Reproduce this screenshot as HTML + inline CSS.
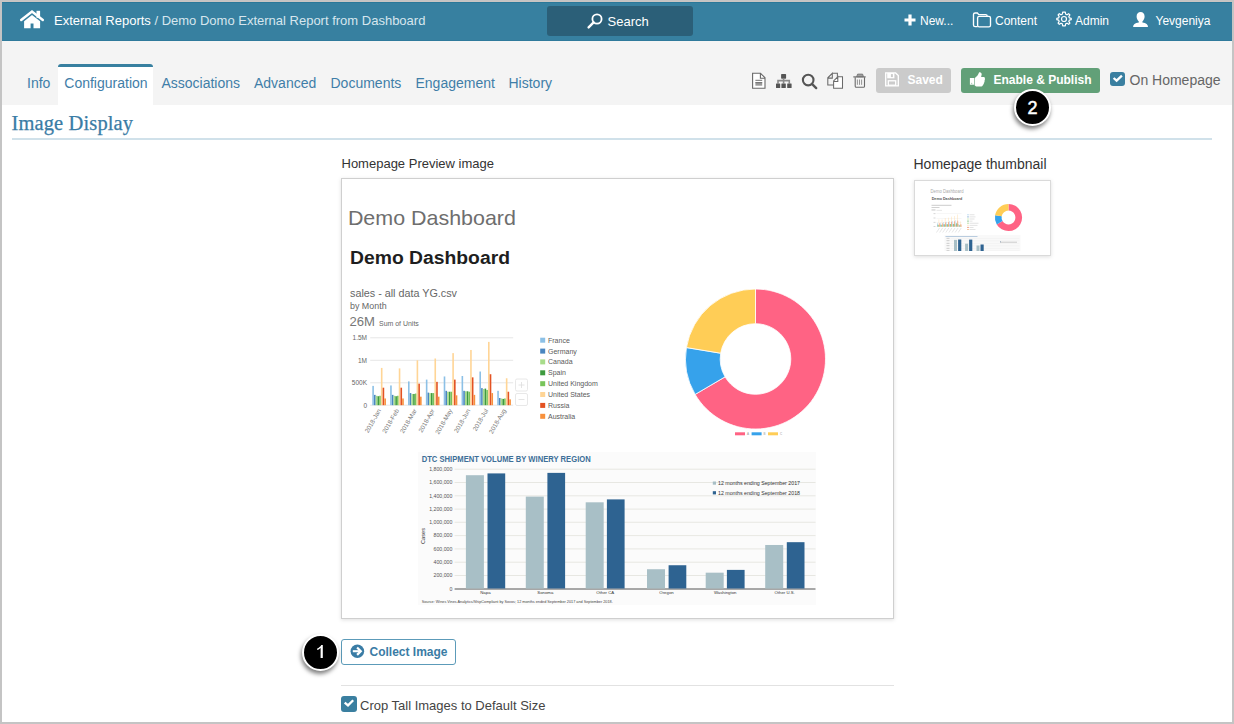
<!DOCTYPE html>
<html><head><meta charset="utf-8">
<style>
*{margin:0;padding:0;box-sizing:border-box}
html,body{width:1234px;height:724px;overflow:hidden;background:#c4c4c4;font-family:"Liberation Sans",sans-serif}
.a{position:absolute;white-space:nowrap;line-height:1}
#page{position:absolute;left:2px;top:2px;width:1230px;height:720px;background:#fff;overflow:hidden}
#hdr{position:absolute;left:0;top:0;width:1230px;height:38px;background:#3880a0}
#tabs{position:absolute;left:0;top:38px;width:1230px;height:64px;background:#f3f3f3}
.wt{color:#fff}
.tab{color:#3f7ea8;font-size:14px}
svg{position:absolute;overflow:visible}
</style></head><body>
<div id="page"></div>
<!-- everything below uses page (1234x724) absolute coords -->
<div class="a" style="left:2px;top:2px;width:1230px;height:39px;background:#3780a0;border-top:1px solid #2a7899;border-bottom:1px solid #2f7a9b"></div>
<div class="a" style="left:0;top:1px;width:1234px;height:1px;background:#c9c5c3"></div>
<div class="a" style="left:2px;top:41px;width:1230px;height:64px;background:#f4f4f4"></div>

<!-- header -->
<svg style="left:0;top:0" width="60" height="40" viewBox="0 0 60 40">
  <rect x="36.5" y="10.8" width="3.6" height="7" fill="#fff"/>
  <path d="M21.2 20 L32 11.6 L42.8 20" fill="none" stroke="#fff" stroke-width="2.5" stroke-linecap="round" stroke-linejoin="miter"/>
  <path d="M24.1 21.2 L32 15 L40.1 21.2 V28.2 H33.5 V23.4 H30.6 V28.2 H24.1 Z" fill="#fff"/>
</svg>
<div class="a wt" style="left:54px;top:13.7px;font-size:13px">External Reports <span style="color:#d6e6ee">/ Demo Domo External Report from Dashboard</span></div>

<div class="a" style="left:547px;top:6px;width:146px;height:30px;background:#2b5f78;border-radius:3px"></div>
<svg style="left:587px;top:13px" width="16" height="16" viewBox="0 0 16 16">
  <circle cx="10" cy="6" r="4.6" fill="none" stroke="#fff" stroke-width="1.8"/>
  <path d="M6.6 9.4 L1.6 14.4" stroke="#fff" stroke-width="2.4" stroke-linecap="round"/>
</svg>
<div class="a wt" style="left:607.5px;top:14.9px;font-size:13px">Search</div>

<svg style="left:904px;top:13.5px" width="12" height="12" viewBox="0 0 12 12">
  <path d="M6 0.5 V11.5 M0.5 6 H11.5" stroke="#fff" stroke-width="3.2"/>
</svg>
<div class="a wt" style="left:920px;top:14.8px;font-size:12px">New...</div>
<svg style="left:968px;top:8px" width="28" height="24" viewBox="968 8 28 24">
  <path d="M977.6 26.6 H975.1 Q973.5 26.6 973.5 25 V14.6 Q973.5 13 975.1 13 H977.4 L978.7 14.6 H985.6 Q987.2 14.6 987.2 16.2" fill="none" stroke="#fff" stroke-width="1.35"/>
  <rect x="977.6" y="16.4" width="12.9" height="10.4" rx="1.6" fill="none" stroke="#fff" stroke-width="1.35"/>
</svg>
<div class="a wt" style="left:995px;top:14.8px;font-size:12px">Content</div>
<svg style="left:1056.4px;top:11.4px" width="16" height="16" viewBox="0 0 16 16">
  <path d="M8 1 L9.3 1.2 L9.7 3.2 L11 3.8 L12.7 2.7 L13.3 3.3 L13.9 3.9 L12.8 5.6 L13.4 6.9 L15.2 7.3 V8.7 L13.4 9.1 L12.8 10.4 L13.9 12.1 L12.7 13.3 L11 12.2 L9.7 12.8 L9.3 14.8 H6.7 L6.3 12.8 L5 12.2 L3.3 13.3 L2.1 12.1 L3.2 10.4 L2.6 9.1 L0.8 8.7 V7.3 L2.6 6.9 L3.2 5.6 L2.1 3.9 L3.3 2.7 L5 3.8 L6.3 3.2 L6.7 1.2 Z" fill="none" stroke="#fff" stroke-width="1.2" stroke-linejoin="round"/>
  <circle cx="8" cy="8" r="2.5" fill="none" stroke="#fff" stroke-width="1.2"/>
</svg>
<div class="a wt" style="left:1075px;top:14.8px;font-size:12px">Admin</div>
<svg style="left:1128px;top:8px" width="24" height="24" viewBox="1128 8 24 24">
  <path d="M1136.6 16.6 C1136.6 13.6 1138.2 12.1 1140.6 12.1 C1143 12.1 1144.6 13.6 1144.6 16.6 C1144.6 18.6 1143.6 20.4 1142.4 21.4 V22.6 C1146.2 23.2 1148 24.4 1148 27.1 H1133.1 C1133.1 24.4 1134.9 23.2 1138.8 22.6 V21.4 C1137.6 20.4 1136.6 18.6 1136.6 16.6 Z" fill="#fff"/>
</svg>
<div class="a wt" style="left:1155.5px;top:14.8px;font-size:12px">Yevgeniya</div>

<!-- tabs -->
<div class="a" style="left:58px;top:64px;width:95px;height:41px;background:#fff;border-top:3px solid #3880a0;border-radius:3px 3px 0 0"></div>
<div class="a tab" style="left:27px;top:75.9px">Info</div>
<div class="a tab" style="left:64.3px;top:75.9px">Configuration</div>
<div class="a tab" style="left:161.4px;top:75.9px">Associations</div>
<div class="a tab" style="left:254px;top:75.9px">Advanced</div>
<div class="a tab" style="left:330.5px;top:75.9px">Documents</div>
<div class="a tab" style="left:415.5px;top:75.9px">Engagement</div>
<div class="a tab" style="left:508.5px;top:75.9px">History</div>

<!-- toolbar -->
<svg style="left:740px;top:66px" width="130" height="26" viewBox="740 66 130 26">
  <path d="M752.6 73.3 H760.5 L765 77.8 V88.2 H752.6 Z" fill="#fff" stroke="#686868" stroke-width="1.1"/>
  <path d="M760.4 73.3 V78.2 H765" fill="none" stroke="#686868" stroke-width="1.1"/>
  <rect x="755.4" y="79.8" width="6.8" height="1" fill="#707070"/>
  <rect x="755.4" y="82.2" width="6.8" height="3.5" fill="#9a9a9a"/>
  <rect x="755.4" y="82.2" width="6.8" height="0.9" fill="#6a6a6a"/>

  <rect x="781.1" y="74" width="5" height="4.7" rx="0.7" fill="#555"/>
  <path d="M783.6 78.5 V83.6 M778 83.6 V80.6 H789.3 V83.6" fill="none" stroke="#8a8a8a" stroke-width="1.6"/>
  <rect x="776" y="83.5" width="4.2" height="4.4" rx="0.5" fill="#555"/>
  <rect x="781.4" y="83.5" width="4.4" height="4.4" rx="0.5" fill="#555"/>
  <rect x="787.2" y="83.5" width="4.4" height="4.4" rx="0.5" fill="#555"/>

  <circle cx="808.2" cy="80.1" r="5.3" fill="none" stroke="#555" stroke-width="2.1"/>
  <path d="M812.2 84.1 L816.2 88.1" stroke="#555" stroke-width="2.3" stroke-linecap="round"/>

  <path d="M832.3 73.3 H837.4 V77 M833.5 84.9 H827.8 V77.8 L832.3 73.3 V78.1 H827.8" fill="none" stroke="#6a6a6a" stroke-width="1.05"/>
  <path d="M837.8 76.8 H842.5 V88.2 H833.6 V81 L837.8 76.8 V81.5 H833.6" fill="#fff" stroke="#6a6a6a" stroke-width="1.05"/>

  <path d="M856.6 76.8 L857.6 74.1 H862.6 L863.5 76.8 Z" fill="#a0a0a0" stroke="#707070" stroke-width="0.8"/>
  <path d="M853.3 76.9 H865.7" stroke="#707070" stroke-width="1.2"/>
  <path d="M855.2 77.2 V86.2 Q855.2 87.3 856.3 87.3 H863.4 Q864.5 87.3 864.5 86.2 V77.2" fill="none" stroke="#6a6a6a" stroke-width="1.1"/>
  <path d="M857.4 79.5 V84.8 M859.5 79.5 V84.8 M861.6 79.5 V84.8" stroke="#8a8a8a" stroke-width="0.9"/>
</svg>

<div class="a" style="left:876px;top:68px;width:75px;height:25px;background:#cbcbcb;border-radius:3px"></div>
<svg style="left:880px;top:68px" width="24" height="24" viewBox="880 68 24 24">
  <path d="M885.7 72.9 H895.6 L898.3 75.6 V85.9 H885.7 Z" fill="none" stroke="#fff" stroke-width="1.35"/>
  <rect x="887.2" y="73" width="7.2" height="5.3" fill="#fff"/>
  <rect x="890.9" y="74.1" width="2" height="3" fill="#cbcbcb"/>
  <rect x="888.3" y="80.8" width="7.4" height="4.4" fill="none" stroke="#fff" stroke-width="1.3"/>
</svg>
<div class="a" style="left:907.5px;top:73.8px;font-size:12px;font-weight:bold;color:#fff">Saved</div>

<div class="a" style="left:961px;top:68px;width:139px;height:25px;background:#62a078;border-radius:3px"></div>
<svg style="left:964px;top:66px" width="26" height="26" viewBox="964 66 26 26">
  <rect x="969.9" y="78" width="4.1" height="6.7" fill="#fff"/>
  <circle cx="971.7" cy="83.3" r="0.55" fill="#8ab49a"/>
  <path d="M974.6 78.3 L977.3 75.8 C978.1 74.8 978.5 73.6 979 72.4 C980.6 71.9 981.9 73 981.7 74.6 L981.1 77 H983.7 C984.7 77 985.1 77.9 984.9 78.7 C985.1 79.5 984.9 80.1 984.5 80.7 C984.7 81.5 984.5 82.3 983.9 82.7 C984 83.7 983.7 84.5 982.9 84.9 C982.7 86.1 981.7 86.6 980.5 86.6 H977.2 C976.2 86.6 975.3 85.8 974.6 85.2 Z" fill="#fff"/>
</svg>
<div class="a" style="left:993.5px;top:73.8px;font-size:12px;font-weight:bold;color:#fff">Enable &amp; Publish</div>

<div class="a" style="left:1110.3px;top:71.5px;width:14.6px;height:14.4px;background:#3a7fa0;border-radius:3px"></div>
<svg style="left:1110.3px;top:71.5px" width="15" height="15" viewBox="0 0 15 15">
  <path d="M3.6 6 L6.6 8.6 L11.9 3.6" fill="none" stroke="#fff" stroke-width="2.3"/>
</svg>
<div class="a" style="left:1129.5px;top:72.6px;font-size:14px;color:#666">On Homepage</div>

<!-- heading -->
<div class="a" style="left:11.5px;top:112.8px;font-family:'Liberation Serif',serif;font-size:20.5px;letter-spacing:0.12px;-webkit-text-stroke:0.25px #3a7ca5;color:#3a7ca5">Image Display</div>
<div class="a" style="left:12px;top:138px;width:1200px;height:2px;background:#d0e1ea"></div>

<!-- labels -->
<div class="a" style="left:341.5px;top:157.2px;font-size:13px;color:#333">Homepage Preview image</div>
<div class="a" style="left:913.5px;top:156.9px;font-size:14px;color:#333">Homepage thumbnail</div>

<!-- preview frame -->
<div class="a" style="left:341px;top:178px;width:553px;height:441px;border:1px solid #cfcfcf;box-shadow:0 1px 4px rgba(0,0,0,.13);background:#fff"></div>
<!-- thumb frame -->
<div class="a" style="left:913.5px;top:179.5px;width:137px;height:76px;border:1px solid #dadada;box-shadow:0 1px 4px rgba(0,0,0,.13);background:#fff"></div>
<svg style="left:0;top:0" width="1234" height="724" viewBox="0 0 1234 724" font-family="Liberation Sans, sans-serif">
<text x="347.9" y="225.2" font-size="21" fill="#6e6e6e" textLength="168" lengthAdjust="spacingAndGlyphs">Demo Dashboard</text>
<text x="350" y="263.6" font-size="18" fill="#1e1e1e" font-weight="bold" textLength="160" lengthAdjust="spacingAndGlyphs">Demo Dashboard</text>
<text x="350" y="297" font-size="10.5" fill="#666" textLength="107" lengthAdjust="spacingAndGlyphs">sales - all data YG.csv</text>
<text x="350" y="309" font-size="8.5" fill="#666" textLength="36.6" lengthAdjust="spacingAndGlyphs">by Month</text>
<text x="349.5" y="325.7" font-size="13" fill="#777" textLength="25.5" lengthAdjust="spacingAndGlyphs">26M</text>
<text x="379" y="325.5" font-size="6.5" fill="#666" textLength="39.8" lengthAdjust="spacingAndGlyphs">Sum of Units</text>
<line x1="370.2" y1="405.2" x2="513.2" y2="405.2" stroke="#e6e6e6" stroke-width="1"/>
<text x="367" y="407.5" font-size="6.5" fill="#666" text-anchor="end">0</text>
<line x1="370.2" y1="382.8" x2="513.2" y2="382.8" stroke="#e6e6e6" stroke-width="1"/>
<text x="367" y="385.1" font-size="6.5" fill="#666" text-anchor="end">500K</text>
<line x1="370.2" y1="360.3" x2="513.2" y2="360.3" stroke="#e6e6e6" stroke-width="1"/>
<text x="367" y="362.6" font-size="6.5" fill="#666" text-anchor="end">1M</text>
<line x1="370.2" y1="337.8" x2="513.2" y2="337.8" stroke="#e6e6e6" stroke-width="1"/>
<text x="367" y="340.1" font-size="6.5" fill="#666" text-anchor="end">1.5M</text>
<rect x="372.30" y="385.89" width="1.6" height="19.31" fill="#8cc0e6"/>
<rect x="374.02" y="394.87" width="1.6" height="10.33" fill="#4a86c0"/>
<rect x="375.74" y="395.77" width="1.6" height="9.43" fill="#a8dc8a"/>
<rect x="377.46" y="396.22" width="1.6" height="8.98" fill="#3e9a3e"/>
<rect x="379.18" y="395.77" width="1.6" height="9.43" fill="#78c45a"/>
<rect x="380.90" y="367.93" width="1.6" height="37.27" fill="#ffd596"/>
<rect x="382.62" y="387.69" width="1.6" height="17.51" fill="#e35222"/>
<rect x="384.34" y="398.46" width="1.6" height="6.74" fill="#f8913c"/>
<text transform="translate(381.3,410.5) rotate(-60)" font-size="6.3" fill="#777" text-anchor="end">2018-Jan</text>
<rect x="390.15" y="385.44" width="1.6" height="19.76" fill="#8cc0e6"/>
<rect x="391.87" y="394.87" width="1.6" height="10.33" fill="#4a86c0"/>
<rect x="393.59" y="395.77" width="1.6" height="9.43" fill="#a8dc8a"/>
<rect x="395.31" y="396.22" width="1.6" height="8.98" fill="#3e9a3e"/>
<rect x="397.03" y="395.77" width="1.6" height="9.43" fill="#78c45a"/>
<rect x="398.75" y="368.38" width="1.6" height="36.82" fill="#ffd596"/>
<rect x="400.47" y="387.69" width="1.6" height="17.51" fill="#e35222"/>
<rect x="402.19" y="398.46" width="1.6" height="6.74" fill="#f8913c"/>
<text transform="translate(399.2,410.5) rotate(-60)" font-size="6.3" fill="#777" text-anchor="end">2018-Feb</text>
<rect x="408.00" y="381.40" width="1.6" height="23.80" fill="#8cc0e6"/>
<rect x="409.72" y="393.08" width="1.6" height="12.12" fill="#4a86c0"/>
<rect x="411.44" y="393.97" width="1.6" height="11.23" fill="#a8dc8a"/>
<rect x="413.16" y="393.97" width="1.6" height="11.23" fill="#3e9a3e"/>
<rect x="414.88" y="393.53" width="1.6" height="11.67" fill="#78c45a"/>
<rect x="416.60" y="360.30" width="1.6" height="44.90" fill="#ffd596"/>
<rect x="418.32" y="383.65" width="1.6" height="21.55" fill="#e35222"/>
<rect x="420.04" y="396.67" width="1.6" height="8.53" fill="#f8913c"/>
<text transform="translate(417.0,410.5) rotate(-60)" font-size="6.3" fill="#777" text-anchor="end">2018-Mar</text>
<rect x="425.85" y="379.61" width="1.6" height="25.59" fill="#8cc0e6"/>
<rect x="427.57" y="392.63" width="1.6" height="12.57" fill="#4a86c0"/>
<rect x="429.29" y="393.08" width="1.6" height="12.12" fill="#a8dc8a"/>
<rect x="431.01" y="393.08" width="1.6" height="12.12" fill="#3e9a3e"/>
<rect x="432.73" y="393.08" width="1.6" height="12.12" fill="#78c45a"/>
<rect x="434.45" y="358.50" width="1.6" height="46.70" fill="#ffd596"/>
<rect x="436.17" y="381.85" width="1.6" height="23.35" fill="#e35222"/>
<rect x="437.89" y="396.67" width="1.6" height="8.53" fill="#f8913c"/>
<text transform="translate(434.9,410.5) rotate(-60)" font-size="6.3" fill="#777" text-anchor="end">2018-Apr</text>
<rect x="443.70" y="376.46" width="1.6" height="28.74" fill="#8cc0e6"/>
<rect x="445.42" y="390.83" width="1.6" height="14.37" fill="#4a86c0"/>
<rect x="447.14" y="391.73" width="1.6" height="13.47" fill="#a8dc8a"/>
<rect x="448.86" y="391.73" width="1.6" height="13.47" fill="#3e9a3e"/>
<rect x="450.58" y="391.73" width="1.6" height="13.47" fill="#78c45a"/>
<rect x="452.30" y="353.12" width="1.6" height="52.08" fill="#ffd596"/>
<rect x="454.02" y="379.61" width="1.6" height="25.59" fill="#e35222"/>
<rect x="455.74" y="395.32" width="1.6" height="9.88" fill="#f8913c"/>
<text transform="translate(452.7,410.5) rotate(-60)" font-size="6.3" fill="#777" text-anchor="end">2018-May</text>
<rect x="461.55" y="376.01" width="1.6" height="29.19" fill="#8cc0e6"/>
<rect x="463.27" y="390.83" width="1.6" height="14.37" fill="#4a86c0"/>
<rect x="464.99" y="391.28" width="1.6" height="13.92" fill="#a8dc8a"/>
<rect x="466.71" y="391.28" width="1.6" height="13.92" fill="#3e9a3e"/>
<rect x="468.43" y="391.73" width="1.6" height="13.47" fill="#78c45a"/>
<rect x="470.15" y="349.97" width="1.6" height="55.23" fill="#ffd596"/>
<rect x="471.87" y="377.36" width="1.6" height="27.84" fill="#e35222"/>
<rect x="473.59" y="394.87" width="1.6" height="10.33" fill="#f8913c"/>
<text transform="translate(470.6,410.5) rotate(-60)" font-size="6.3" fill="#777" text-anchor="end">2018-Jun</text>
<rect x="479.40" y="371.52" width="1.6" height="33.68" fill="#8cc0e6"/>
<rect x="481.12" y="388.14" width="1.6" height="17.06" fill="#4a86c0"/>
<rect x="482.84" y="389.04" width="1.6" height="16.16" fill="#a8dc8a"/>
<rect x="484.56" y="388.59" width="1.6" height="16.61" fill="#3e9a3e"/>
<rect x="486.28" y="389.93" width="1.6" height="15.27" fill="#78c45a"/>
<rect x="488.00" y="341.89" width="1.6" height="63.31" fill="#ffd596"/>
<rect x="489.72" y="374.22" width="1.6" height="30.98" fill="#e35222"/>
<rect x="491.44" y="393.08" width="1.6" height="12.12" fill="#f8913c"/>
<text transform="translate(488.4,410.5) rotate(-60)" font-size="6.3" fill="#777" text-anchor="end">2018-Jul</text>
<rect x="497.25" y="390.83" width="1.6" height="14.37" fill="#8cc0e6"/>
<rect x="498.97" y="398.02" width="1.6" height="7.18" fill="#4a86c0"/>
<rect x="500.69" y="398.46" width="1.6" height="6.74" fill="#a8dc8a"/>
<rect x="502.41" y="398.91" width="1.6" height="6.29" fill="#3e9a3e"/>
<rect x="504.13" y="398.46" width="1.6" height="6.74" fill="#78c45a"/>
<rect x="505.85" y="378.26" width="1.6" height="26.94" fill="#ffd596"/>
<rect x="507.57" y="391.73" width="1.6" height="13.47" fill="#e35222"/>
<rect x="509.29" y="399.36" width="1.6" height="5.84" fill="#f8913c"/>
<text transform="translate(506.2,410.5) rotate(-60)" font-size="6.3" fill="#777" text-anchor="end">2018-Aug</text>
<rect x="515.5" y="379" width="12" height="12" rx="1.5" fill="#fff" stroke="#e2e2e2" stroke-width="0.8"/>
<path d="M518.5 385 H524.5 M521.5 382 V388" stroke="#ddd" stroke-width="0.8"/>
<rect x="515.5" y="393.5" width="12" height="12" rx="1.5" fill="#fff" stroke="#e2e2e2" stroke-width="0.8"/>
<path d="M518.5 399.5 H524.5" stroke="#ddd" stroke-width="0.8"/>
<rect x="540.2" y="337.7" width="5" height="5" fill="#8cc0e6"/>
<text x="548" y="342.7" font-size="7" fill="#5a5a5a">France</text>
<rect x="540.2" y="348.6" width="5" height="5" fill="#4a86c0"/>
<text x="548" y="353.6" font-size="7" fill="#5a5a5a">Germany</text>
<rect x="540.2" y="359.4" width="5" height="5" fill="#a8dc8a"/>
<text x="548" y="364.4" font-size="7" fill="#5a5a5a">Canada</text>
<rect x="540.2" y="370.3" width="5" height="5" fill="#3e9a3e"/>
<text x="548" y="375.3" font-size="7" fill="#5a5a5a">Spain</text>
<rect x="540.2" y="381.2" width="5" height="5" fill="#78c45a"/>
<text x="548" y="386.2" font-size="7" fill="#5a5a5a">United Kingdom</text>
<rect x="540.2" y="392.0" width="5" height="5" fill="#ffd596"/>
<text x="548" y="397.0" font-size="7" fill="#5a5a5a">United States</text>
<rect x="540.2" y="402.9" width="5" height="5" fill="#e35222"/>
<text x="548" y="407.9" font-size="7" fill="#5a5a5a">Russia</text>
<rect x="540.2" y="413.8" width="5" height="5" fill="#f8913c"/>
<text x="548" y="418.8" font-size="7" fill="#5a5a5a">Australia</text>
<path d="M755.50 289.00 A70 70 0 1 1 695.12 394.42 L725.05 376.86 A35.3 35.3 0 1 0 755.50 323.70 Z" fill="#ff6384" stroke="#fff" stroke-width="0.8"/>
<path d="M695.12 394.42 A70 70 0 0 1 686.44 347.57 L720.67 353.23 A35.3 35.3 0 0 0 725.05 376.86 Z" fill="#36a2eb" stroke="#fff" stroke-width="0.8"/>
<path d="M686.44 347.57 A70 70 0 0 1 755.50 289.00 L755.50 323.70 A35.3 35.3 0 0 0 720.67 353.23 Z" fill="#ffcd56" stroke="#fff" stroke-width="0.8"/>
<rect x="735" y="432.3" width="10" height="3" fill="#ff6384"/><rect x="751.6" y="432.3" width="10" height="3" fill="#36a2eb"/><rect x="768" y="432.3" width="10" height="3" fill="#ffcd56"/>
<text x="747" y="435.3" font-size="3" fill="#999">A</text><text x="763.5" y="435.3" font-size="3" fill="#999">B</text><text x="780" y="435.3" font-size="3" fill="#999">C</text>
<rect x="418" y="452" width="398" height="153" fill="#fbfbfb"/>
<text x="421.7" y="461.9" font-size="9.8" font-weight="bold" fill="#3d6f98" textLength="169" lengthAdjust="spacingAndGlyphs">DTC SHIPMENT VOLUME BY WINERY REGION</text>
<text x="452.3" y="590.6" font-size="5.2" fill="#555" text-anchor="end">0</text>
<line x1="454.6" y1="575.5" x2="815.5" y2="575.5" stroke="#e2e2dc" stroke-width="0.8"/>
<text x="452.3" y="577.3" font-size="5.2" fill="#555" text-anchor="end">200,000</text>
<line x1="454.6" y1="562.2" x2="815.5" y2="562.2" stroke="#e2e2dc" stroke-width="0.8"/>
<text x="452.3" y="564.0" font-size="5.2" fill="#555" text-anchor="end">400,000</text>
<line x1="454.6" y1="548.9" x2="815.5" y2="548.9" stroke="#e2e2dc" stroke-width="0.8"/>
<text x="452.3" y="550.7" font-size="5.2" fill="#555" text-anchor="end">600,000</text>
<line x1="454.6" y1="535.6" x2="815.5" y2="535.6" stroke="#e2e2dc" stroke-width="0.8"/>
<text x="452.3" y="537.4" font-size="5.2" fill="#555" text-anchor="end">800,000</text>
<line x1="454.6" y1="522.3" x2="815.5" y2="522.3" stroke="#e2e2dc" stroke-width="0.8"/>
<text x="452.3" y="524.1" font-size="5.2" fill="#555" text-anchor="end">1,000,000</text>
<line x1="454.6" y1="509.1" x2="815.5" y2="509.1" stroke="#e2e2dc" stroke-width="0.8"/>
<text x="452.3" y="510.9" font-size="5.2" fill="#555" text-anchor="end">1,200,000</text>
<line x1="454.6" y1="495.8" x2="815.5" y2="495.8" stroke="#e2e2dc" stroke-width="0.8"/>
<text x="452.3" y="497.6" font-size="5.2" fill="#555" text-anchor="end">1,400,000</text>
<line x1="454.6" y1="482.5" x2="815.5" y2="482.5" stroke="#e2e2dc" stroke-width="0.8"/>
<text x="452.3" y="484.3" font-size="5.2" fill="#555" text-anchor="end">1,600,000</text>
<line x1="454.6" y1="469.2" x2="815.5" y2="469.2" stroke="#e2e2dc" stroke-width="0.8"/>
<text x="452.3" y="471.0" font-size="5.2" fill="#555" text-anchor="end">1,800,000</text>
<line x1="454.6" y1="589" x2="815.5" y2="589" stroke="#555" stroke-width="1"/>
<text transform="translate(425.3,536) rotate(-90)" font-size="5.6" fill="#333" text-anchor="middle">Cases</text>
<rect x="465.90" y="475.20" width="18" height="113.30" fill="#a8bfc6"/>
<rect x="487.50" y="473.41" width="17.7" height="115.09" fill="#2e6391"/>
<text x="485.40" y="594" font-size="4.3" fill="#333" text-anchor="middle">Napa</text>
<rect x="525.80" y="496.60" width="18" height="91.90" fill="#a8bfc6"/>
<rect x="547.40" y="472.88" width="17.7" height="115.62" fill="#2e6391"/>
<text x="545.30" y="594" font-size="4.3" fill="#333" text-anchor="middle">Sonoma</text>
<rect x="585.70" y="502.31" width="18" height="86.19" fill="#a8bfc6"/>
<rect x="606.90" y="499.39" width="17.7" height="89.11" fill="#2e6391"/>
<text x="605.20" y="594" font-size="4.3" fill="#333" text-anchor="middle">Other CA</text>
<rect x="647.00" y="569.23" width="18" height="19.27" fill="#a8bfc6"/>
<rect x="668.60" y="565.24" width="17.7" height="23.26" fill="#2e6391"/>
<text x="666.50" y="594" font-size="4.3" fill="#333" text-anchor="middle">Oregon</text>
<rect x="705.70" y="572.68" width="18" height="15.82" fill="#a8bfc6"/>
<rect x="726.90" y="569.89" width="17.7" height="18.61" fill="#2e6391"/>
<text x="725.20" y="594" font-size="4.3" fill="#333" text-anchor="middle">Washington</text>
<rect x="765.20" y="544.98" width="18" height="43.52" fill="#a8bfc6"/>
<rect x="786.80" y="542.18" width="17.7" height="46.32" fill="#2e6391"/>
<text x="784.70" y="594" font-size="4.3" fill="#333" text-anchor="middle">Other U.S.</text>
<rect x="712.8" y="481.5" width="3.2" height="3.2" fill="#a8bfc6"/><rect x="712.8" y="491.2" width="3.2" height="3.2" fill="#2e6391"/>
<text x="718" y="485" font-size="5.6" fill="#333" textLength="82" lengthAdjust="spacingAndGlyphs">12 months ending September 2017</text>
<text x="718" y="494.7" font-size="5.6" fill="#333" textLength="82" lengthAdjust="spacingAndGlyphs">12 months ending September 2018</text>
<text x="421.7" y="602.6" font-size="4.2" fill="#444" textLength="191" lengthAdjust="spacingAndGlyphs">Source: Wines Vines Analytics/ShipCompliant by Sovos; 12 months ended September 2017 and September 2018.</text>
</svg>
<svg style="left:914.5px;top:180.5px;overflow:hidden" width="135" height="70.5" viewBox="914.5 180.5 135 70.5" font-family="Liberation Sans, sans-serif">
<text x="930" y="192" font-size="5" fill="#aaa" textLength="33" lengthAdjust="spacingAndGlyphs">Demo Dashboard</text>
<text x="931.2" y="199.6" font-size="4.3" font-weight="bold" fill="#555" textLength="30.5" lengthAdjust="spacingAndGlyphs">Demo Dashboard</text>
<rect x="931" y="204.3" width="20" height="1" fill="#ccc"/>
<rect x="931" y="206.6" width="8" height="0.9" fill="#ccc"/>
<rect x="931" y="208.9" width="4" height="1.1" fill="#ccc"/><rect x="936" y="209.4" width="5.5" height="0.7" fill="#ddd"/>
<rect x="936" y="226.1" width="25" height="0.3" fill="#e5e5e5"/>
<rect x="933" y="225.7" width="2" height="0.8" fill="#ccc"/>
<rect x="936" y="221.8" width="25" height="0.3" fill="#e5e5e5"/>
<rect x="933" y="221.4" width="2" height="0.8" fill="#ccc"/>
<rect x="936" y="217.5" width="25" height="0.3" fill="#e5e5e5"/>
<rect x="933" y="217.1" width="2" height="0.8" fill="#ccc"/>
<rect x="936" y="213.2" width="25" height="0.3" fill="#e5e5e5"/>
<rect x="933" y="212.8" width="2" height="0.8" fill="#ccc"/>
<rect x="936.50" y="222.40" width="0.45" height="3.70" fill="#8cc0e6" opacity="0.8"/>
<rect x="936.84" y="224.12" width="0.45" height="1.98" fill="#4a86c0" opacity="0.8"/>
<rect x="937.18" y="224.29" width="0.45" height="1.81" fill="#a8dc8a" opacity="0.8"/>
<rect x="937.52" y="224.38" width="0.45" height="1.72" fill="#3e9a3e" opacity="0.8"/>
<rect x="937.86" y="224.29" width="0.45" height="1.81" fill="#78c45a" opacity="0.8"/>
<rect x="938.20" y="218.96" width="0.45" height="7.14" fill="#ffd596" opacity="0.8"/>
<rect x="938.54" y="222.75" width="0.45" height="3.35" fill="#e35222" opacity="0.8"/>
<rect x="938.88" y="224.81" width="0.45" height="1.29" fill="#f8913c" opacity="0.8"/>
<path d="M939.0 227.5 L936.0 232" stroke="#ddd" stroke-width="0.7"/>
<rect x="939.60" y="222.32" width="0.45" height="3.78" fill="#8cc0e6" opacity="0.8"/>
<rect x="939.94" y="224.12" width="0.45" height="1.98" fill="#4a86c0" opacity="0.8"/>
<rect x="940.28" y="224.29" width="0.45" height="1.81" fill="#a8dc8a" opacity="0.8"/>
<rect x="940.62" y="224.38" width="0.45" height="1.72" fill="#3e9a3e" opacity="0.8"/>
<rect x="940.96" y="224.29" width="0.45" height="1.81" fill="#78c45a" opacity="0.8"/>
<rect x="941.30" y="219.05" width="0.45" height="7.05" fill="#ffd596" opacity="0.8"/>
<rect x="941.64" y="222.75" width="0.45" height="3.35" fill="#e35222" opacity="0.8"/>
<rect x="941.98" y="224.81" width="0.45" height="1.29" fill="#f8913c" opacity="0.8"/>
<path d="M942.1 227.5 L939.1 232" stroke="#ddd" stroke-width="0.7"/>
<rect x="942.70" y="221.54" width="0.45" height="4.56" fill="#8cc0e6" opacity="0.8"/>
<rect x="943.04" y="223.78" width="0.45" height="2.32" fill="#4a86c0" opacity="0.8"/>
<rect x="943.38" y="223.95" width="0.45" height="2.15" fill="#a8dc8a" opacity="0.8"/>
<rect x="943.72" y="223.95" width="0.45" height="2.15" fill="#3e9a3e" opacity="0.8"/>
<rect x="944.06" y="223.86" width="0.45" height="2.24" fill="#78c45a" opacity="0.8"/>
<rect x="944.40" y="217.50" width="0.45" height="8.60" fill="#ffd596" opacity="0.8"/>
<rect x="944.74" y="221.97" width="0.45" height="4.13" fill="#e35222" opacity="0.8"/>
<rect x="945.08" y="224.47" width="0.45" height="1.63" fill="#f8913c" opacity="0.8"/>
<path d="M945.2 227.5 L942.2 232" stroke="#ddd" stroke-width="0.7"/>
<rect x="945.80" y="221.20" width="0.45" height="4.90" fill="#8cc0e6" opacity="0.8"/>
<rect x="946.14" y="223.69" width="0.45" height="2.41" fill="#4a86c0" opacity="0.8"/>
<rect x="946.48" y="223.78" width="0.45" height="2.32" fill="#a8dc8a" opacity="0.8"/>
<rect x="946.82" y="223.78" width="0.45" height="2.32" fill="#3e9a3e" opacity="0.8"/>
<rect x="947.16" y="223.78" width="0.45" height="2.32" fill="#78c45a" opacity="0.8"/>
<rect x="947.50" y="217.16" width="0.45" height="8.94" fill="#ffd596" opacity="0.8"/>
<rect x="947.84" y="221.63" width="0.45" height="4.47" fill="#e35222" opacity="0.8"/>
<rect x="948.18" y="224.47" width="0.45" height="1.63" fill="#f8913c" opacity="0.8"/>
<path d="M948.3 227.5 L945.3 232" stroke="#ddd" stroke-width="0.7"/>
<rect x="948.90" y="220.60" width="0.45" height="5.50" fill="#8cc0e6" opacity="0.8"/>
<rect x="949.24" y="223.35" width="0.45" height="2.75" fill="#4a86c0" opacity="0.8"/>
<rect x="949.58" y="223.52" width="0.45" height="2.58" fill="#a8dc8a" opacity="0.8"/>
<rect x="949.92" y="223.52" width="0.45" height="2.58" fill="#3e9a3e" opacity="0.8"/>
<rect x="950.26" y="223.52" width="0.45" height="2.58" fill="#78c45a" opacity="0.8"/>
<rect x="950.60" y="216.12" width="0.45" height="9.98" fill="#ffd596" opacity="0.8"/>
<rect x="950.94" y="221.20" width="0.45" height="4.90" fill="#e35222" opacity="0.8"/>
<rect x="951.28" y="224.21" width="0.45" height="1.89" fill="#f8913c" opacity="0.8"/>
<path d="M951.4 227.5 L948.4 232" stroke="#ddd" stroke-width="0.7"/>
<rect x="952.00" y="220.51" width="0.45" height="5.59" fill="#8cc0e6" opacity="0.8"/>
<rect x="952.34" y="223.35" width="0.45" height="2.75" fill="#4a86c0" opacity="0.8"/>
<rect x="952.68" y="223.43" width="0.45" height="2.67" fill="#a8dc8a" opacity="0.8"/>
<rect x="953.02" y="223.43" width="0.45" height="2.67" fill="#3e9a3e" opacity="0.8"/>
<rect x="953.36" y="223.52" width="0.45" height="2.58" fill="#78c45a" opacity="0.8"/>
<rect x="953.70" y="215.52" width="0.45" height="10.58" fill="#ffd596" opacity="0.8"/>
<rect x="954.04" y="220.77" width="0.45" height="5.33" fill="#e35222" opacity="0.8"/>
<rect x="954.38" y="224.12" width="0.45" height="1.98" fill="#f8913c" opacity="0.8"/>
<path d="M954.5 227.5 L951.5 232" stroke="#ddd" stroke-width="0.7"/>
<rect x="955.10" y="219.65" width="0.45" height="6.45" fill="#8cc0e6" opacity="0.8"/>
<rect x="955.44" y="222.83" width="0.45" height="3.27" fill="#4a86c0" opacity="0.8"/>
<rect x="955.78" y="223.00" width="0.45" height="3.10" fill="#a8dc8a" opacity="0.8"/>
<rect x="956.12" y="222.92" width="0.45" height="3.18" fill="#3e9a3e" opacity="0.8"/>
<rect x="956.46" y="223.18" width="0.45" height="2.92" fill="#78c45a" opacity="0.8"/>
<rect x="956.80" y="213.97" width="0.45" height="12.13" fill="#ffd596" opacity="0.8"/>
<rect x="957.14" y="220.17" width="0.45" height="5.93" fill="#e35222" opacity="0.8"/>
<rect x="957.48" y="223.78" width="0.45" height="2.32" fill="#f8913c" opacity="0.8"/>
<path d="M957.6 227.5 L954.6 232" stroke="#ddd" stroke-width="0.7"/>
<rect x="958.20" y="223.35" width="0.45" height="2.75" fill="#8cc0e6" opacity="0.8"/>
<rect x="958.54" y="224.72" width="0.45" height="1.38" fill="#4a86c0" opacity="0.8"/>
<rect x="958.88" y="224.81" width="0.45" height="1.29" fill="#a8dc8a" opacity="0.8"/>
<rect x="959.22" y="224.90" width="0.45" height="1.20" fill="#3e9a3e" opacity="0.8"/>
<rect x="959.56" y="224.81" width="0.45" height="1.29" fill="#78c45a" opacity="0.8"/>
<rect x="959.90" y="220.94" width="0.45" height="5.16" fill="#ffd596" opacity="0.8"/>
<rect x="960.24" y="223.52" width="0.45" height="2.58" fill="#e35222" opacity="0.8"/>
<rect x="960.58" y="224.98" width="0.45" height="1.12" fill="#f8913c" opacity="0.8"/>
<path d="M960.7 227.5 L957.7 232" stroke="#ddd" stroke-width="0.7"/>
<rect x="967" y="213.8" width="1" height="1" fill="#8cc0e6"/><rect x="969" y="213.9" width="5" height="0.8" fill="#ddd"/>
<rect x="967" y="215.9" width="1" height="1" fill="#4a86c0"/><rect x="969" y="216.0" width="6" height="0.8" fill="#ddd"/>
<rect x="967" y="218.0" width="1" height="1" fill="#a8dc8a"/><rect x="969" y="218.1" width="5" height="0.8" fill="#ddd"/>
<rect x="967" y="220.1" width="1" height="1" fill="#3e9a3e"/><rect x="969" y="220.2" width="3" height="0.8" fill="#ddd"/>
<rect x="967" y="222.2" width="1" height="1" fill="#78c45a"/><rect x="969" y="222.3" width="9" height="0.8" fill="#ddd"/>
<rect x="967" y="224.3" width="1" height="1" fill="#ffd596"/><rect x="969" y="224.4" width="8" height="0.8" fill="#ddd"/>
<rect x="967" y="226.4" width="1" height="1" fill="#e35222"/><rect x="969" y="226.5" width="4" height="0.8" fill="#ddd"/>
<rect x="967" y="228.5" width="1" height="1" fill="#f8913c"/><rect x="969" y="228.6" width="6" height="0.8" fill="#ddd"/>
<path d="M1008.00 203.40 A13.6 13.6 0 1 1 996.27 223.88 L1002.05 220.49 A6.9 6.9 0 1 0 1008.00 210.10 Z" fill="#ff6384"/>
<path d="M996.27 223.88 A13.6 13.6 0 0 1 994.58 214.78 L1001.19 215.87 A6.9 6.9 0 0 0 1002.05 220.49 Z" fill="#36a2eb"/>
<path d="M994.58 214.78 A13.6 13.6 0 0 1 1008.00 203.40 L1008.00 210.10 A6.9 6.9 0 0 0 1001.19 215.87 Z" fill="#ffcd56"/>
<rect x="944" y="234.5" width="76" height="22" fill="#f9f9f9"/>
<rect x="945" y="235.6" width="32" height="0.8" fill="#a9c0d8"/>
<rect x="950" y="250.3" width="69" height="0.3" fill="#e6e6e6"/>
<rect x="946" y="249.9" width="3" height="0.7" fill="#bbb"/>
<rect x="950" y="247.8" width="69" height="0.3" fill="#e6e6e6"/>
<rect x="946" y="247.4" width="3" height="0.7" fill="#bbb"/>
<rect x="950" y="245.3" width="69" height="0.3" fill="#e6e6e6"/>
<rect x="946" y="244.9" width="3" height="0.7" fill="#bbb"/>
<rect x="950" y="242.8" width="69" height="0.3" fill="#e6e6e6"/>
<rect x="946" y="242.4" width="3" height="0.7" fill="#bbb"/>
<rect x="950" y="240.3" width="69" height="0.3" fill="#e6e6e6"/>
<rect x="946" y="239.9" width="3" height="0.7" fill="#bbb"/>
<rect x="950" y="237.8" width="69" height="0.3" fill="#e6e6e6"/>
<rect x="946" y="237.4" width="3" height="0.7" fill="#bbb"/>
<rect x="953.5" y="239.4" width="3" height="16.6" fill="#a8bfc6"/>
<rect x="957.6" y="239" width="3.2" height="17.0" fill="#2e6391"/>
<rect x="964.6" y="243.2" width="3" height="12.8" fill="#a8bfc6"/>
<rect x="968.6" y="239.1" width="3.2" height="16.9" fill="#2e6391"/>
<rect x="976" y="245" width="3" height="11.0" fill="#a8bfc6"/>
<rect x="980" y="244" width="3.2" height="12.0" fill="#2e6391"/>
<rect x="999.5" y="241.2" width="17" height="1" fill="#ccc"/><rect x="999.5" y="240.8" width="1" height="1" fill="#9ab"/>
</svg>

<!-- collect -->
<div class="a" style="left:341px;top:639px;width:115px;height:26px;border:1px solid #5c9bb9;border-radius:3px;background:#fff"></div>
<svg style="left:346px;top:640px" width="24" height="24" viewBox="346 640 24 24">
  <circle cx="357.35" cy="651.2" r="6.8" fill="#3a7ca5"/>
  <path d="M352.8 651.2 H359.4" stroke="#fff" stroke-width="2.1"/>
  <path d="M357.1 647.5 L360.8 651.2 L357.1 654.9" fill="none" stroke="#fff" stroke-width="2.2"/>
</svg>
<div class="a" style="left:369.5px;top:646px;font-size:12px;font-weight:bold;color:#3a7ca5">Collect Image</div>

<div class="a" style="left:341px;top:685px;width:553px;height:1px;background:#e2e2e2"></div>
<div class="a" style="left:341.3px;top:696.3px;width:15.4px;height:15.4px;background:#3a7fa0;border-radius:3px"></div>
<svg style="left:341.3px;top:696.3px" width="16" height="16" viewBox="0 0 16 16">
  <path d="M3.7 6.6 L7 9.4 L12.2 4.3" fill="none" stroke="#fff" stroke-width="2.3"/>
</svg>
<div class="a" style="left:360px;top:698.8px;font-size:13px;color:#444">Crop Tall Images to Default Size</div>

<!-- badges -->
<div class="a" style="left:1014px;top:89.3px;width:37px;height:37px;border-radius:50%;background:#000;border:2px solid #fff;box-shadow:-1px 3px 4px rgba(0,0,0,.5)"></div>
<div class="a" style="left:1014px;top:98.9px;width:37px;text-align:center;font-size:18px;color:#fff;-webkit-text-stroke:0.5px #fff">2</div>
<div class="a" style="left:302px;top:634px;width:37px;height:37px;border-radius:50%;background:#000;border:2px solid #fff;box-shadow:-1px 3px 4px rgba(0,0,0,.5)"></div>
<svg style="left:310px;top:640px" width="20" height="22" viewBox="310 640 20 22">
  <path d="M317.2 648.6 C319 647.6 320.4 646.6 321.3 644.9 H322.8 V658 H320.6 V648 C319.8 648.8 318.4 649.6 317.2 650 Z" fill="#fff"/>
</svg>

</body></html>
